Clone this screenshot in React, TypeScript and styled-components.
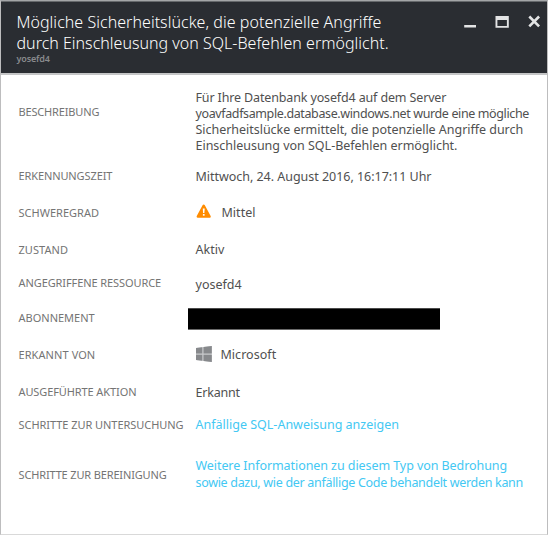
import React from 'react';
import styled, { createGlobalStyle } from 'styled-components';

const GlobalStyle = createGlobalStyle`
  *, *::before, *::after { box-sizing: border-box; }
  body {
    margin: 0;
    background: #fff;
    font-family: "Noto Sans", "Open Sans", sans-serif;
  }
`;

const Blade = styled.main`
  width: 548px;
  height: 535px;
  display: flex;
  flex-direction: column;
  background: #fff;
  border: 1px solid #bdbdbe;
  border-top-color: #a3a5a7;
  border-bottom-color: #d9d9d9;
  overflow: hidden;
`;

const Header = styled.header`
  flex: none;
  height: 74px;
  display: flex;
  justify-content: space-between;
  padding: 10px 6px 0 15.5px;
  color: #fff;
  background: #2a2d32;
  border-top: 1px solid #66696c;
  border-bottom: 2px solid #c4c5c6;
`;

const Title = styled.h1`
  margin: 0;
  font-size: 16px;
  font-weight: 300;
  line-height: 21px;
`;

const Line = styled.span<{ $spacing?: number }>`
  display: block;
  white-space: nowrap;
  letter-spacing: ${({ $spacing = 0 }) => $spacing}px;
`;

const Subtitle = styled.div`
  font-size: 9px;
  line-height: 9px;
  font-weight: 600;
  letter-spacing: -0.15px;
  color: #888a8d;
`;

const Controls = styled.div`
  display: flex;
  gap: 18px;
  height: 20px;
`;

const ControlButton = styled.button`
  width: 14px;
  height: 20px;
  padding: 0;
  border: 0;
  background: none;
  svg { display: block; }
`;

const Details = styled.dl`
  margin: 0;
  padding: 14px 0 0 17.5px;
`;

const Row = styled.div<{ $height: number }>`
  display: grid;
  grid-template-columns: 177px 1fr;
  align-items: start;
  height: ${({ $height }) => $height}px;
`;

const Label = styled.dt<{ $top: number; $spacing: number }>`
  padding-top: ${({ $top }) => $top}px;
  font-size: 11px;
  line-height: 16px;
  letter-spacing: ${({ $spacing }) => $spacing}px;
  white-space: nowrap;
  color: #747474;
`;

const Value = styled.dd<{ $top?: number; $lineHeight?: number }>`
  display: flex;
  margin: 0;
  padding-top: ${({ $top = 1 }) => $top}px;
  font-size: 12.5px;
  line-height: ${({ $lineHeight = 16 }) => $lineHeight}px;
  color: #505050;
`;

const IconSlot = styled.span<{ $width: number }>`
  flex: none;
  width: ${({ $width }) => $width}px;
  height: 16px;
  margin-top: -1px;
  svg { display: block; }
`;

const Link = styled.a`
  color: #43c8f3;
  text-decoration: none;
`;

const Redacted = styled.span`
  width: 252px;
  height: 22px;
  margin-left: -7.5px;
  background: #000;
  border-top: 1px solid #4a4a4a;
  border-bottom: 1px solid #6a6a6a;
`;

const WarningIcon = () => (
  <svg width="16" height="16" viewBox="0 0 16 16">
    <path d="M7.7 1.8 13.5 12.5H1.9Z" fill="#ff8c00" stroke="#ff8c00" strokeWidth="2.6" strokeLinejoin="round" />
    <path d="M6.8 4.5h1.9l-.3 4.6H7.1Z" fill="#fff" />
    <rect x="6.9" y="10" width="1.7" height="1.7" fill="#fff" />
  </svg>
);

const WindowsIcon = () => (
  <svg width="17" height="17" viewBox="0 0 17 17">
    <path d="M0 2.1 15.8 0v16L0 14Z" fill="#c9cbcd" />
    <path d="M0 2.1 6.3 1.3v6.1H0ZM7.5 1.1 15.8 0v7.4H7.5ZM0 8.7h6.3v6.1L0 14ZM7.5 8.7h8.3V16l-8.3-1.1Z" fill="#87898c" />
  </svg>
);

export default function App() {
  return (
    <>
      <GlobalStyle />
      <Blade>
        <Header>
          <div>
            <Title>
              <Line $spacing={0.04}>Mögliche Sicherheitslücke, die potenzielle Angriffe</Line>
              <Line $spacing={0.01}>durch Einschleusung von SQL-Befehlen ermöglicht.</Line>
            </Title>
            <Subtitle>yosefd4</Subtitle>
          </div>
          <Controls>
            <ControlButton aria-label="Minimieren">
              <svg width="14" height="20" viewBox="0 0 14 20">
                <path d="M1.2 13h11.8v2.5H1.2Z" fill="#e3e4e5" />
              </svg>
            </ControlButton>
            <ControlButton aria-label="Maximieren">
              <svg width="14" height="20" viewBox="0 0 14 20">
                <path fillRule="evenodd" d="M.5 4h13.3v11.8H.5ZM2.4 8v6h9.5V8Z" fill="#e3e4e5" />
              </svg>
            </ControlButton>
            <ControlButton aria-label="Schließen">
              <svg width="14" height="20" viewBox="0 0 14 20">
                <path d="m2.3 4.5 9.8 9.8m0-9.8-9.8 9.8" stroke="#e3e4e5" strokeWidth="2.6" />
              </svg>
            </ControlButton>
          </Controls>
        </Header>
        <Details>
          <Row $height={79}>
            <Label $top={15} $spacing={-0.16}>BESCHREIBUNG</Label>
            <Value>
              <div>
                <Line $spacing={-0.14}>Für Ihre Datenbank yosefd4 auf dem Server</Line>
                <Line $spacing={-0.38}>yoavfadfsample.database.windows.net wurde eine mögliche</Line>
                <Line $spacing={-0.03}>Sicherheitslücke ermittelt, die potenzielle Angriffe durch</Line>
                <Line $spacing={-0.02}>Einschleusung von SQL-Befehlen ermöglicht.</Line>
              </div>
            </Value>
          </Row>
          <Row $height={36}>
            <Label $top={0} $spacing={-0.11}>ERKENNUNGSZEIT</Label>
            <Value><Line $spacing={-0.03}>Mittwoch, 24. August 2016, 16:17:11 Uhr</Line></Value>
          </Row>
          <Row $height={37}>
            <Label $top={1} $spacing={0.02}>SCHWEREGRAD</Label>
            <Value>
              <IconSlot $width={26}><WarningIcon /></IconSlot>
              <Line $spacing={0.02}>Mittel</Line>
            </Value>
          </Row>
          <Row $height={34}>
            <Label $top={1} $spacing={0.05}>ZUSTAND</Label>
            <Value><Line>Aktiv</Line></Value>
          </Row>
          <Row $height={33}>
            <Label $top={0} $spacing={-0.09}>ANGEGRIFFENE RESSOURCE</Label>
            <Value $top={2}><Line>yosefd4</Line></Value>
          </Row>
          <Row $height={38}>
            <Label $top={2} $spacing={0}>ABONNEMENT</Label>
            <Value $top={0}><Redacted /></Value>
          </Row>
          <Row $height={38}>
            <Label $top={1} $spacing={0.08}>ERKANNT VON</Label>
            <Value>
              <IconSlot $width={25}><WindowsIcon /></IconSlot>
              <Line $spacing={0.03}>Microsoft</Line>
            </Value>
          </Row>
          <Row $height={32}>
            <Label $top={0} $spacing={-0.1}>AUSGEFÜHRTE AKTION</Label>
            <Value><Line $spacing={-0.2}>Erkannt</Line></Value>
          </Row>
          <Row $height={41}>
            <Label $top={1} $spacing={-0.05}>SCHRITTE ZUR UNTERSUCHUNG</Label>
            <Value><Link><Line>Anfällige SQL-Anweisung anzeigen</Line></Link></Value>
          </Row>
          <Row $height={50}>
            <Label $top={10} $spacing={-0.15}>SCHRITTE ZUR BEREINIGUNG</Label>
            <Value $top={0} $lineHeight={17}>
              <Link>
                <Line $spacing={-0.07}>Weitere Informationen zu diesem Typ von Bedrohung</Line>
                <Line $spacing={-0.31}>sowie dazu, wie der anfällige Code behandelt werden kann</Line>
              </Link>
            </Value>
          </Row>
        </Details>
      </Blade>
    </>
  );
}
